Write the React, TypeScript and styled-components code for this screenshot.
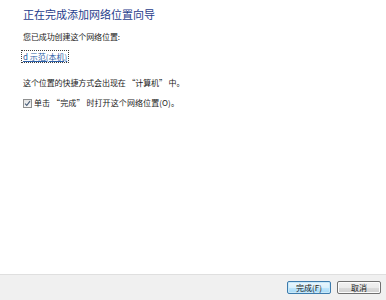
import React from "react";
import styled, { createGlobalStyle } from "styled-components";

const Global = createGlobalStyle`
  html, body { margin: 0; padding: 0; background: #ffffff; }
  body { font-family: "Noto Sans CJK SC", "Noto Sans", sans-serif; }
`;

const Window = styled.div`
  width: 386px;
  height: 300px;
  display: flex;
  flex-direction: column;
  background: #ffffff;
`;

const Content = styled.div`
  flex: 1;
  display: flex;
  flex-direction: column;
  align-items: flex-start;
  padding: 7px 0 0 23px;
`;

const Title = styled.div`
  font-size: 11px;
  line-height: 14px;
  color: #1f3d8c;
`;

const Text = styled.div<{ $mt: number }>`
  margin-top: ${(p) => p.$mt}px;
  font-size: 8px;
  line-height: 12px;
  color: #1a1a1a;
  letter-spacing: -0.1px;
`;

const Link = styled.a<{ $mt: number }>`
  margin-top: ${(p) => p.$mt}px;
  font-size: 8px;
  line-height: 11px;
  color: #2a5ea8;
  text-decoration: underline;
  outline: 1px dotted #404040;
  outline-offset: 0;
  padding: 0 1px;
  margin-left: -1px;
`;

const CheckRow = styled.label<{ $mt: number }>`
  margin-top: ${(p) => p.$mt}px;
  display: flex;
  align-items: center;
  gap: 2px;
  font-size: 8px;
  line-height: 12px;
  color: #1a1a1a;
  letter-spacing: 0.1px;
`;

const Box = styled.span`
  width: 9px;
  height: 9px;
  box-sizing: border-box;
  border: 1px solid #8e8f8f;
  background: linear-gradient(#e4e4e4, #f7f7f7);
  display: flex;
  align-items: center;
  justify-content: center;
`;

const Footer = styled.div`
  height: 26px;
  box-sizing: border-box;
  border-top: 1px solid #dfdfdf;
  background: #f0f0f0;
  display: flex;
  align-items: center;
  justify-content: flex-end;
  gap: 6px;
  padding: 0 5px 1px 0;
`;

const Button = styled.button<{ $default?: boolean }>`
  width: 44px;
  height: 13px;
  padding: 0;
  box-sizing: border-box;
  border: 1px solid ${(p) => (p.$default ? "#3d7bad" : "#707070")};
  border-radius: 2px;
  background: ${(p) =>
    p.$default
      ? "linear-gradient(#eaf6fd 0%, #d9f0fc 50%, #bee6fd 51%, #a7d9f5 100%)"
      : "linear-gradient(#f2f2f2 0%, #ebebeb 50%, #dddddd 51%, #cfcfcf 100%)"};
  box-shadow: inset 0 0 0 1px ${(p) => (p.$default ? "#c8e8f8" : "#fcfcfc")};
  font-family: "Noto Sans CJK SC", "Noto Sans", sans-serif;
  font-size: 8px;
  line-height: 11px;
  color: #1a1a1a;
`;

export default function App() {
  return (
    <Window>
      <Global />
      <Content>
        <Title>正在完成添加网络位置向导</Title>
        <Text $mt={10}>您已成功创建这个网络位置:</Text>
        <Link $mt={8}>d 示范(本机)</Link>
        <Text $mt={15}>这个位置的快捷方式会出现在 “计算机” 中。</Text>
        <CheckRow $mt={8}>
          <Box>
            <svg width="7" height="7" viewBox="0 0 7 7">
              <path d="M1 3.6 L2.8 5.4 L6 1.2" fill="none" stroke="#4a5f7a" strokeWidth="1.1" />
            </svg>
          </Box>
          单击 “完成” 时打开这个网络位置(O)。
        </CheckRow>
      </Content>
      <Footer>
        <Button $default>完成(F)</Button>
        <Button>取消</Button>
      </Footer>
    </Window>
  );
}
